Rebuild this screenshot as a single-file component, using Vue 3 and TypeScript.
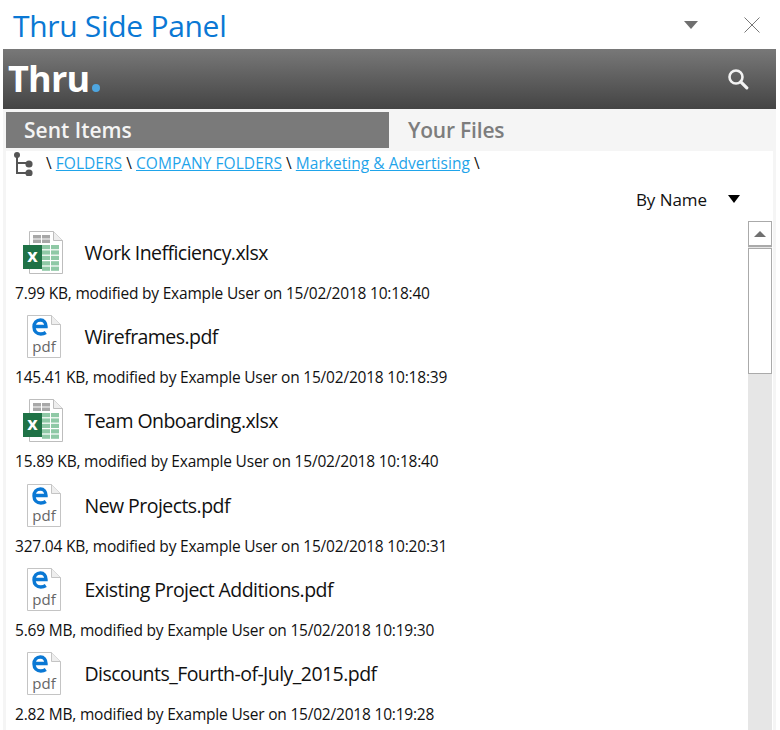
<script setup lang="ts">
interface FileRow { name: string; meta: string; kind: 'xlsx' | 'pdf' }
const files: FileRow[] = [
  { name: 'Work Inefficiency.xlsx', meta: '7.99 KB, modified by Example User on 15/02/2018 10:18:40', kind: 'xlsx' },
  { name: 'Wireframes.pdf', meta: '145.41 KB, modified by Example User on 15/02/2018 10:18:39', kind: 'pdf' },
  { name: 'Team Onboarding.xlsx', meta: '15.89 KB, modified by Example User on 15/02/2018 10:18:40', kind: 'xlsx' },
  { name: 'New Projects.pdf', meta: '327.04 KB, modified by Example User on 15/02/2018 10:20:31', kind: 'pdf' },
  { name: 'Existing Project Additions.pdf', meta: '5.69 MB, modified by Example User on 15/02/2018 10:19:30', kind: 'pdf' },
  { name: 'Discounts_Fourth-of-July_2015.pdf', meta: '2.82 MB, modified by Example User on 15/02/2018 10:19:28', kind: 'pdf' },
]
const cells = [0, 1, 2, 3, 4]
</script>

<template>
  <div class="page">
    <div class="title-bar">
      <div class="title">Thru Side Panel</div>
      <div class="title-tools">
        <svg width="14" height="8" viewBox="0 0 14 8"><path d="M0 0h14L7 8z" fill="#6f6f6f" /></svg>
        <svg width="16" height="16" viewBox="0 0 16 16"><path d="M.5.5l15 15M15.5.5l-15 15" stroke="#777" stroke-width="1" fill="none" /></svg>
      </div>
    </div>
    <div class="panel">
      <header class="brand">
        <div class="logo">Thru<span class="dot"></span></div>
        <svg class="search" width="22" height="22" viewBox="0 0 22 22">
          <circle cx="9" cy="9" r="6.5" fill="none" stroke="#f2f2f2" stroke-width="2.6" />
          <path d="M13.8 13.8l6 6" stroke="#f2f2f2" stroke-width="3.2" stroke-linecap="round" />
        </svg>
      </header>
      <nav class="tabs">
        <div class="tab active">Sent Items</div>
        <div class="tab">Your Files</div>
      </nav>
      <main class="content">
        <div class="crumbs">
          <svg class="tree" width="22" height="24" viewBox="0 0 22 24">
            <path d="M4 3v18h10M4 11h10" stroke="#555" stroke-width="2" fill="none" />
            <circle cx="4" cy="3" r="3" fill="#555" />
            <circle cx="16" cy="12" r="3.6" fill="#555" />
            <circle cx="16" cy="21" r="3.6" fill="#555" />
          </svg>
          <span class="path">\ <a>FOLDERS</a> \ <a>COMPANY FOLDERS</a> \ <a>Marketing &amp; Advertising</a> \</span>
        </div>
        <div class="sort">
          <span>By Name</span>
          <svg width="12" height="8" viewBox="0 0 12 8"><path d="M0 0h12L6 8z" fill="#000" /></svg>
        </div>
        <div class="list-wrap">
          <ul class="list">
            <li v-for="f in files" :key="f.name" class="row">
              <div class="row-main">
                <div class="icon">
                  <svg v-if="f.kind === 'xlsx'" width="40" height="43" viewBox="0 0 40 43">
                    <path d="M6.5.5h24l9 9v33h-33z" fill="#fff" stroke="#bdbdbd" />
                    <path d="M30.5.5v9h9" fill="#eee" stroke="#bdbdbd" />
                    <rect x="10" y="4" width="8" height="3.5" fill="#a8a8a8" />
                    <rect x="19" y="4" width="8" height="3.5" fill="#a8a8a8" />
                    <rect x="10" y="8.5" width="8" height="3.5" fill="#a8a8a8" />
                    <rect x="19" y="8.5" width="8" height="3.5" fill="#a8a8a8" />
                    <template v-for="c in cells" :key="c">
                      <rect x="19" :y="14 + c * 5.4" width="8" height="4.2" fill="#8fc9a6" />
                      <rect x="28" :y="14 + c * 5.4" width="8" height="4.2" fill="#8fc9a6" />
                    </template>
                    <rect x="0" y="14" width="19" height="24" fill="#1f7246" />
                    <text x="9.5" y="31" text-anchor="middle" class="x-mark">x</text>
                  </svg>
                  <svg v-else class="pdf" width="34" height="43" viewBox="0 0 34 43">
                    <path d="M.5.5h24l9 9v33H.5z" fill="#fff" stroke="#c4c4c4" />
                    <path d="M24.5.5v9h9" fill="#eee" stroke="#c4c4c4" />
                    <path d="M8 11.5h11c0-4-2.2-6.5-5.6-6.5C9.6 5 7 8 7 12c0 4.3 2.9 7 6.8 7 2 0 3.6-.5 5-1.5" fill="none" stroke="#0a78d4" stroke-width="3.4" />
                    <text x="17" y="37" text-anchor="middle" class="pdf-mark">pdf</text>
                  </svg>
                </div>
                <span class="name">{{ f.name }}</span>
              </div>
              <div class="meta">{{ f.meta }}</div>
            </li>
          </ul>
          <div class="scrollbar">
            <div class="sb-up">
              <svg width="12" height="6" viewBox="0 0 12 6"><path d="M6 0l6 6H0z" fill="#6f6f6f" /></svg>
            </div>
            <div class="sb-thumb"></div>
          </div>
        </div>
      </main>
    </div>
  </div>
</template>

<style>
html, body { margin: 0; background: #fff; overflow: hidden; }
</style>

<style scoped>
.page {
  width: 780px;
  height: 730px;
  overflow: hidden;
  background: #fff;
  font-family: "Open Sans", "Noto Sans", sans-serif;
  color: #111;
}
.title-bar {
  height: 49px;
  display: flex;
  align-items: center;
  justify-content: space-between;
  padding: 0 20px 0 13px;
  box-sizing: border-box;
}
.title {
  font-size: 30px;
  line-height: 49px;
  color: #0a78d4;
  letter-spacing: -0.3px;
  position: relative;
  top: 1px;
}
.title-tools { display: flex; align-items: center; gap: 46px; }
.panel {
  margin: 0 4px 0 3px;
  height: 681px;
  background: #f5f5f5;
  display: flex;
  flex-direction: column;
}
.brand {
  height: 60px;
  flex: none;
  background: linear-gradient(#787878, #444);
  display: flex;
  align-items: center;
  justify-content: space-between;
  padding: 0 27px 0 5px;
}
.logo {
  font-size: 36px;
  font-weight: 700;
  color: #fff;
  line-height: 60px;
  letter-spacing: -0.8px;
  display: flex;
  align-items: baseline;
}
.dot {
  width: 8px;
  height: 8px;
  border-radius: 50%;
  background: #4ea6e0;
  margin-left: 3px;
}
.tabs {
  flex: none;
  height: 42px;
  display: flex;
}
.tab {
  width: 387px;
  font-size: 21px;
  font-weight: 600;
  color: #7d7d7d;
  line-height: 42px;
  padding-left: 19px;
  letter-spacing: -0.2px;
  box-sizing: border-box;
}
.tab.active {
  width: 383px;
  height: 36px;
  margin: 3px 0 0 3px;
  padding-left: 18px;
  line-height: 36px;
  letter-spacing: 0;
  background: #7a7a7a;
  color: #f4f4f4;
}
.content {
  flex: 1;
  min-height: 0;
  margin: 0 3px;
  background: #fff;
  display: flex;
  flex-direction: column;
}
.crumbs {
  height: 26px;
  flex: none;
  display: flex;
  align-items: flex-start;
  font-size: 15.5px;
  line-height: 24px;
}
.tree { margin: 1px 0 0 7px; flex: none; }
.path { margin-left: 11px; letter-spacing: 0.04px; white-space: pre; }
.path a { color: #1fa4ea; text-decoration: underline; }
.sort {
  height: 44px;
  flex: none;
  display: flex;
  align-items: center;
  justify-content: flex-end;
  gap: 21px;
  padding-right: 33px;
  font-size: 17px;
  letter-spacing: -0.05px;
  box-sizing: border-box;
}
.list-wrap { flex: 1; min-height: 0; display: flex; position: relative; }
.list {
  flex: 1;
  list-style: none;
  margin: 0;
  padding: 0;
  min-width: 0;
}
.row { height: 84.2px; padding-left: 9px; box-sizing: border-box; }
.row-main { height: 63px; display: flex; align-items: center; }
.icon { width: 69.5px; height: 43px; margin-top: 10px; align-self: flex-start; flex: none; display: flex; padding-left: 8px; box-sizing: border-box; }
.pdf { margin-left: 4px; }
.name { font-size: 19.5px; letter-spacing: -0.55px; white-space: nowrap; }
.meta { font-size: 15.5px; line-height: 18px; letter-spacing: -0.2px; white-space: nowrap; }
.x-mark { font: 700 18px "Open Sans", sans-serif; fill: #fff; }
.pdf-mark { font: 400 15px "Open Sans", sans-serif; fill: #666; }
.scrollbar {
  width: 24px;
  flex: none;
  margin-right: 1px;
  background: #e6e6e6;
  display: flex;
  flex-direction: column;
}
.sb-up {
  height: 26px;
  flex: none;
  background: #fff;
  border: 1px solid #aaa;
  border-bottom-width: 2px;
  box-sizing: border-box;
  display: flex;
  align-items: center;
  justify-content: center;
}
.sb-thumb {
  height: 126px;
  flex: none;
  margin-top: 1px;
  background: #fff;
  border: 1px solid #aaa;
  box-sizing: border-box;
}
</style>
